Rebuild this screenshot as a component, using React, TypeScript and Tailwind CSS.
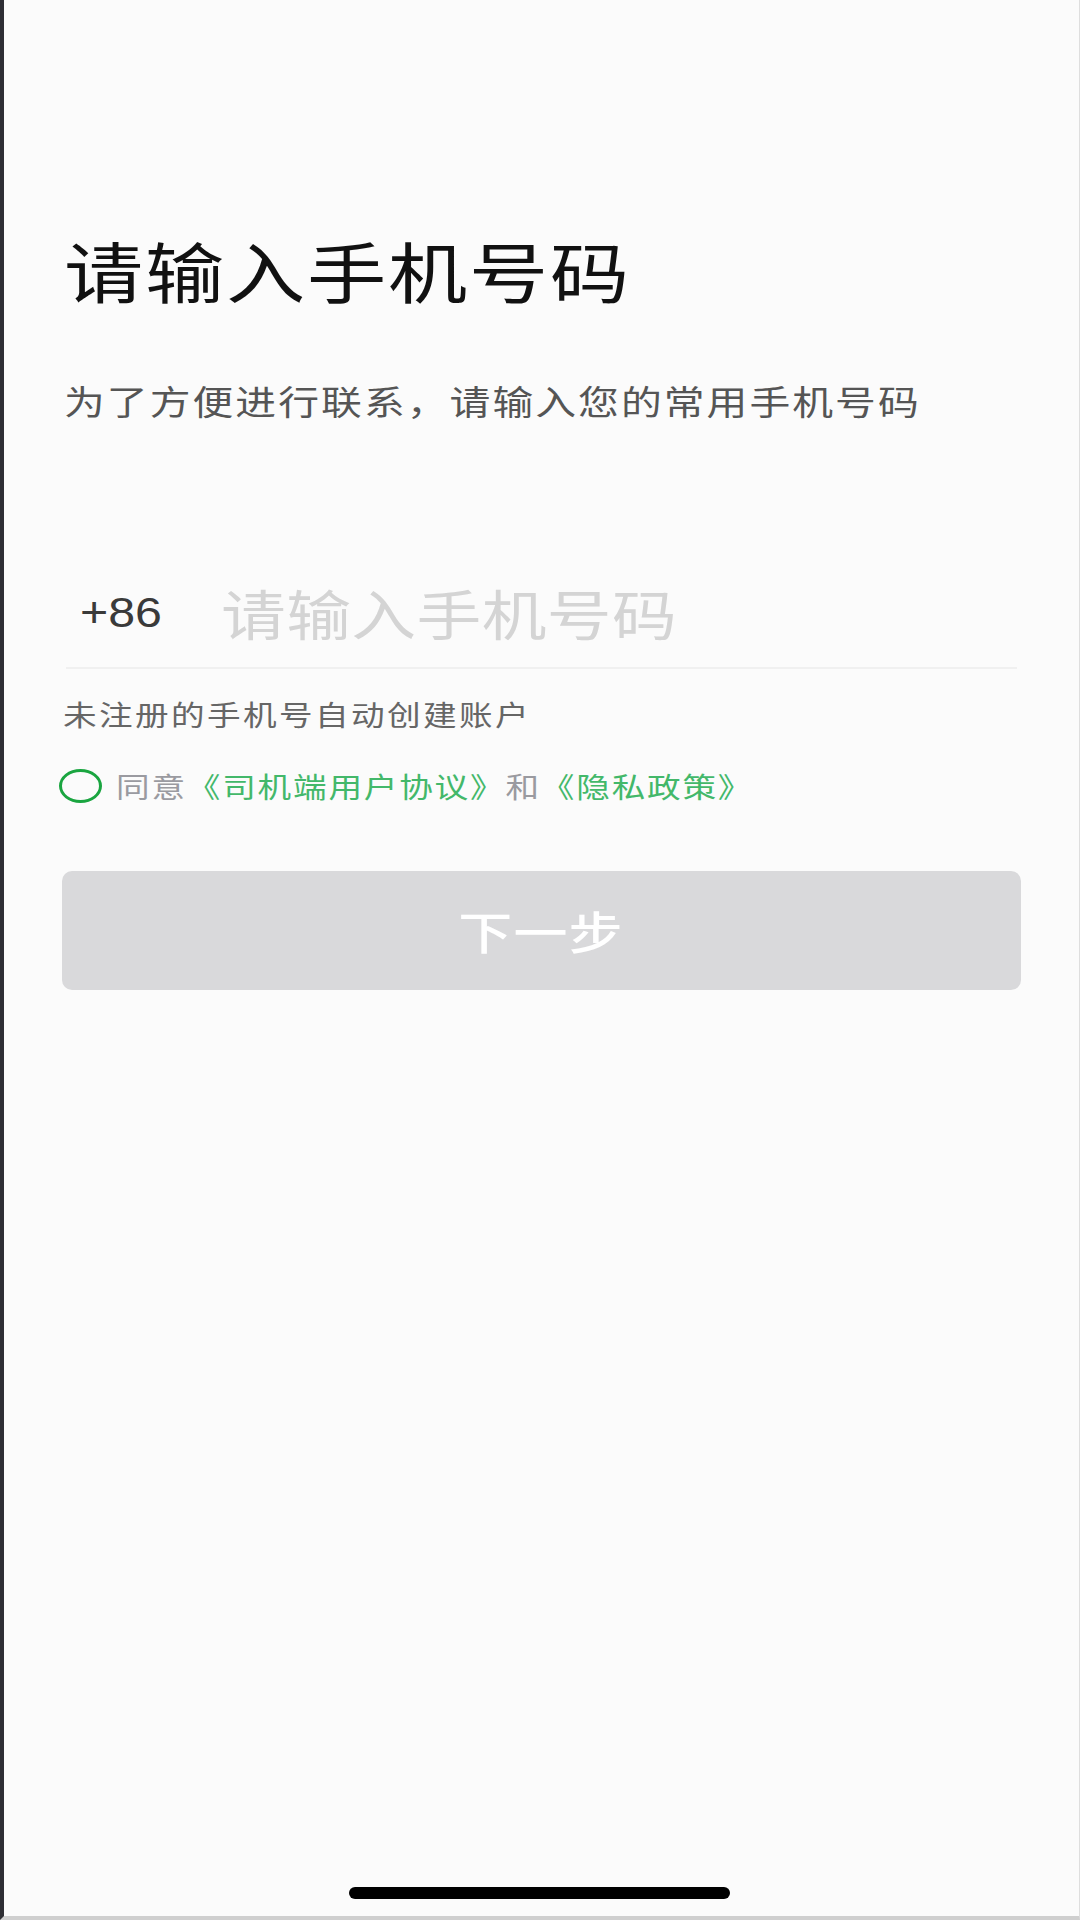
import React from 'react';

const CJK = "font-['Noto_Sans_CJK_SC','Noto_Sans',sans-serif]";

export default function App() {
  return (
    <div
      className={`flex flex-col w-[1080px] h-[1920px] bg-[#fbfbfb] border-l-4 border-l-[#2e2e34] border-r border-r-[#dedede] border-b-4 border-b-[#cfcfcf] overflow-hidden ${CJK}`}
    >
      <div className="flex flex-col pl-[58px] pr-[58px]">
        {/* Title */}
        <h1 className="mt-[236px] h-[66px] pl-[2px] text-[66px] leading-[66px] font-normal text-[#111111] tracking-[1.5px] whitespace-nowrap">
          <span className="inline-block origin-left scale-x-[1.2]">请输入手机号码</span>
        </h1>

        {/* Subtitle */}
        <p className="mt-[82px] h-[34px] pl-[2px] text-[34px] leading-[34px] text-[#555555] tracking-[1.7px] whitespace-nowrap">
          <span className="inline-block origin-left scale-x-[1.2]">为了方便进行联系，请输入您的常用手机号码</span>
        </p>

        {/* Phone input */}
        <div className="mt-[155px] flex items-center h-[80px]">
          <div className="w-[159px] shrink-0 pl-[18px]">
            <span className="inline-block origin-left scale-x-[1.15] font-['Liberation_Sans',sans-serif] text-[42px] leading-none text-[#3a3a3a]">
              +86
            </span>
          </div>
          <span className="inline-block origin-left scale-x-[1.2] text-[54px] leading-[54px] text-[#d4d4d4] tracking-[0.3px] whitespace-nowrap">
            请输入手机号码
          </span>
        </div>
        <div className="mt-[14px] mx-[4px] h-[2px] bg-[#f0f0f0]" />

        {/* Note */}
        <p className="mt-[31px] h-[28px] pl-[1px] text-[28px] leading-[28px] text-[#666666] tracking-[2px] whitespace-nowrap">
          <span className="inline-block origin-left scale-x-[1.2]">未注册的手机号自动创建账户</span>
        </p>

        {/* Agreement */}
        <div className="mt-[41px] flex items-center h-[34px]">
          <span className="ml-[-3px] w-[43px] h-[34px] shrink-0 rounded-[50%] border-[3px] border-[#1aa540]" />
          <span className="ml-[14px] inline-block origin-left scale-x-[1.2] text-[28px] leading-[28px] tracking-[1.5px] whitespace-nowrap">
            <span className="text-[#9a9aa0]">同意</span>
            <span className="text-[#43b86a]">《司机端用户协议》</span>
            <span className="text-[#9a9aa0]">和</span>
            <span className="text-[#43b86a]">《隐私政策》</span>
          </span>
        </div>

        {/* Next button */}
        <button
          disabled
          className="mt-[68px] h-[119px] w-full rounded-[10px] bg-[#d9d9db] flex items-center justify-center"
        >
          <span className="inline-block scale-x-[1.2] text-[45px] leading-none font-medium text-white tracking-[1px]">
            下一步
          </span>
        </button>
      </div>

      {/* Home indicator */}
      <div className="mt-auto mb-[17px] self-center ml-[-4px] w-[381px] h-[12px] rounded-full bg-black" />
    </div>
  );
}
